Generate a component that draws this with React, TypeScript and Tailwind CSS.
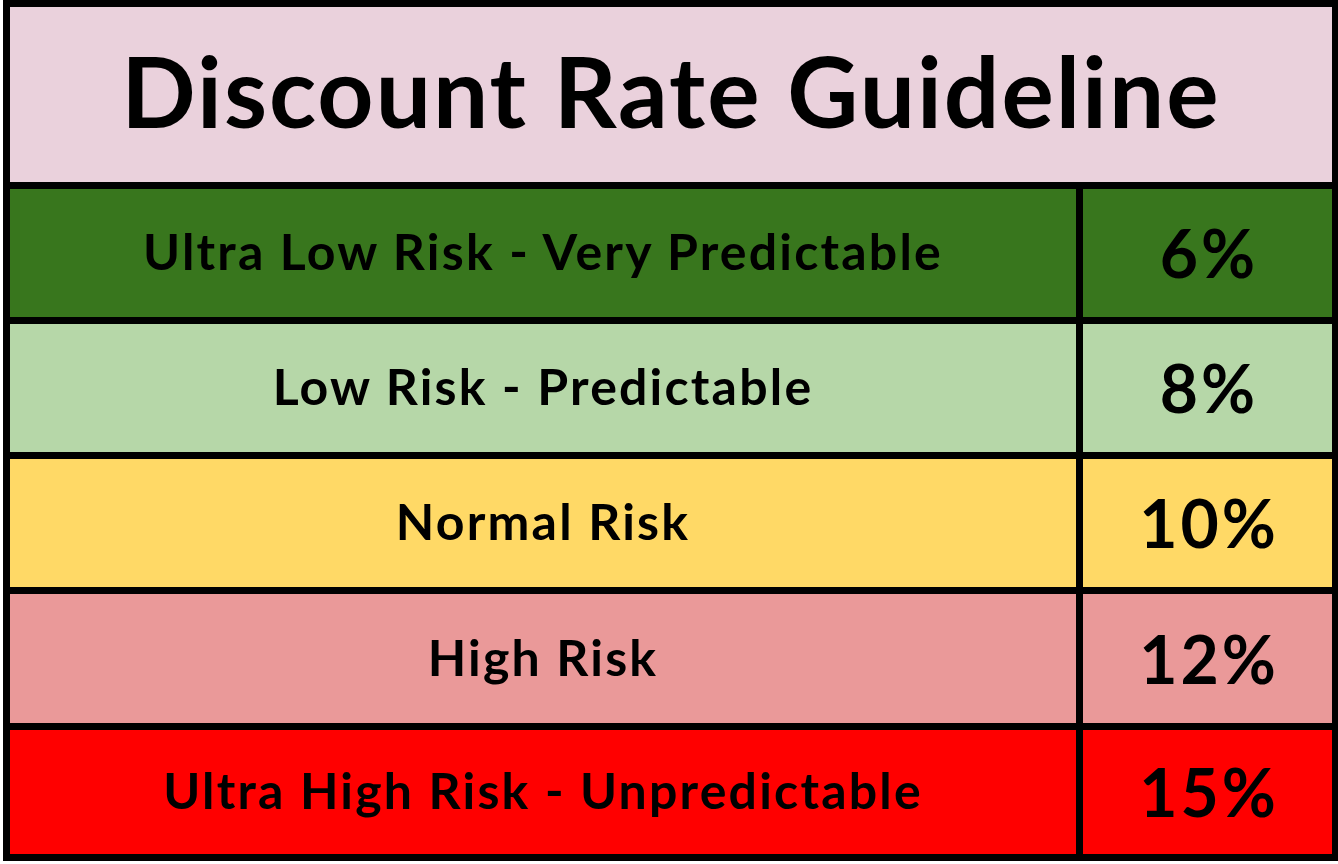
import React from 'react';

interface RiskRow {
    label: string;
    rate: string;
    bg: string;
    height: string;
}

// heights include the 7px bottom rule (border-box)
const rows: RiskRow[] = [
    { label: 'Ultra Low Risk - Very Predictable', rate: '6%', bg: 'bg-[#38761d]', height: 'h-[135px]' },
    { label: 'Low Risk - Predictable', rate: '8%', bg: 'bg-[#b6d7a8]', height: 'h-[135px]' },
    { label: 'Normal Risk', rate: '10%', bg: 'bg-[#ffd966]', height: 'h-[135px]' },
    { label: 'High Risk', rate: '12%', bg: 'bg-[#ea9999]', height: 'h-[136px]' },
    { label: 'Ultra High Risk - Unpredictable', rate: '15%', bg: 'bg-[#ff0000]', height: 'h-[124px]' },
];

export default function App() {
    return (
        <div className="w-[1338px] h-[864px] bg-white font-['Lato',sans-serif] font-bold text-black">
            <div className="ml-[3px] w-[1335px] border-[7px] border-r-[6px] border-black">
                <div className="h-[182px] flex items-center justify-center bg-[#ead1dc] border-b-[7px] border-black">
                    <h1 className="text-[98px] leading-none tracking-[2px] pb-[10px]">Discount Rate Guideline</h1>
                </div>
                {rows.map((row, i) => (
                    <div
                        key={row.rate}
                        className={`flex ${row.height} ${row.bg} ${i < rows.length - 1 ? 'border-b-[7px] border-black' : ''}`}
                    >
                        <div className="w-[1066px] flex items-center justify-center border-r-[7px] border-black box-content">
                            <span className="text-[50px] leading-none tracking-[2.2px] pb-[4px]">{row.label}</span>
                        </div>
                        <div className="flex-1 flex items-center justify-center">
                            <span className="text-[66px] leading-none tracking-[3px] pl-[3px]">{row.rate}</span>
                        </div>
                    </div>
                ))}
            </div>
        </div>
    );
}
